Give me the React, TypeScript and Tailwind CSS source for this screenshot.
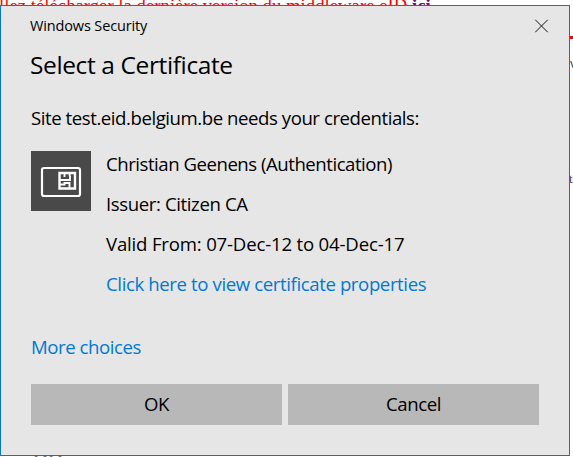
import type { ReactNode } from "react";

function BackgroundPage() {
  return (
    <div className="absolute inset-0 overflow-hidden font-['Liberation_Serif',serif]">
      <p className="-mt-[5px] -ml-px whitespace-nowrap text-[18.750px] leading-[22px] text-[#ff0000]">
        llez télécharger la dernière version du middleware eID <b className="text-[#800080]">ici</b>.
      </p>
      <div className="mt-[19px] h-[3px] w-full bg-[#ff0000]" />
      <p className="mt-[17px] pl-[570px] font-['Liberation_Sans',sans-serif] text-[13px] leading-[16px] text-[#444]">v</p>
      <p className="mt-[99px] pl-[569px] font-['Liberation_Serif',serif] text-[13px] leading-[16px] text-[#34466d]">to</p>
      <p className="mt-[260px] pl-[33px] font-['Liberation_Sans',sans-serif] text-[27px] leading-[24px] text-[#777]">oo</p>
    </div>
  );
}

function CloseIcon() {
  return (
    <svg className="-translate-x-[0.5px]" width="14" height="14" viewBox="0 0 14 14" fill="none" stroke="#111" strokeWidth="1">
      <path d="M.7.7 13.3 13.3M13.3.7.7 13.3" />
    </svg>
  );
}

function CardIcon() {
  return (
    <svg width="60" height="60" viewBox="0 0 60 60" fill="none" stroke="#fff">
      <rect x="11" y="17" width="38" height="28" rx="2" strokeWidth="2.200" />
      <path d="M28.500 22h15.500v15.500h-15.500z" strokeWidth="2.400" />
      <path d="M28 29h11v-4M33.500 22v4M38.700 22v3M28 33.500h5.500v-1.500h5v5.500" strokeWidth="1.900" />
    </svg>
  );
}

function Button({ children }: { children: ReactNode }) {
  return (
    <button className="flex h-[41px] w-[251px] items-center justify-center bg-[#b8b8b8] pb-px text-[18.600px] leading-[24px] tracking-[-0.42px] text-black">
      {children}
    </button>
  );
}

export default function App() {
  return (
    <main className="relative h-[457px] w-[573px] overflow-hidden bg-white">
      <BackgroundPage />
      <section className="absolute top-[5px] left-0 flex h-[451px] w-[570px] flex-col border border-[#0078d7] bg-[#e6e6e6] pr-[30px] pl-[30px] font-['Open_Sans',sans-serif] text-[18.600px] leading-[24px] tracking-[-0.44px] text-black">
        <header className="-mr-[10px] flex h-[40px] items-center justify-between">
          <span className="-ml-px text-[14.500px] tracking-[-0.14px] whitespace-nowrap">Windows Security</span>
          <CloseIcon />
        </header>
        <h1 className="-ml-px h-[36px] pt-px text-[24.500px] leading-[36px] tracking-[-0.38px] whitespace-nowrap">Select a Certificate</h1>
        <p className="mt-[24px] whitespace-nowrap">Site test.eid.belgium.be needs your credentials:</p>
        <div className="mt-[21px] flex gap-[15px]">
          <div className="h-[60px] w-[60px] shrink-0 bg-[#494949]">
            <CardIcon />
          </div>
          <div className="mt-px flex flex-col gap-4 whitespace-nowrap">
            <p className="tracking-[-0.47px]">Christian Geenens (Authentication)</p>
            <p className="tracking-[-0.39px]">Issuer: Citizen CA</p>
            <p className="tracking-[-0.18px]">Valid From: 07-Dec-12 to 04-Dec-17</p>
            <a className="tracking-[-0.39px] text-[#0078d7]">Click here to view certificate properties</a>
          </div>
        </div>
        <a className="mt-[39px] text-[#0078d7]">More choices</a>
        <div className="mt-[25px] flex gap-[6px]">
          <Button>OK</Button>
          <Button>Cancel</Button>
        </div>
      </section>
    </main>
  );
}
